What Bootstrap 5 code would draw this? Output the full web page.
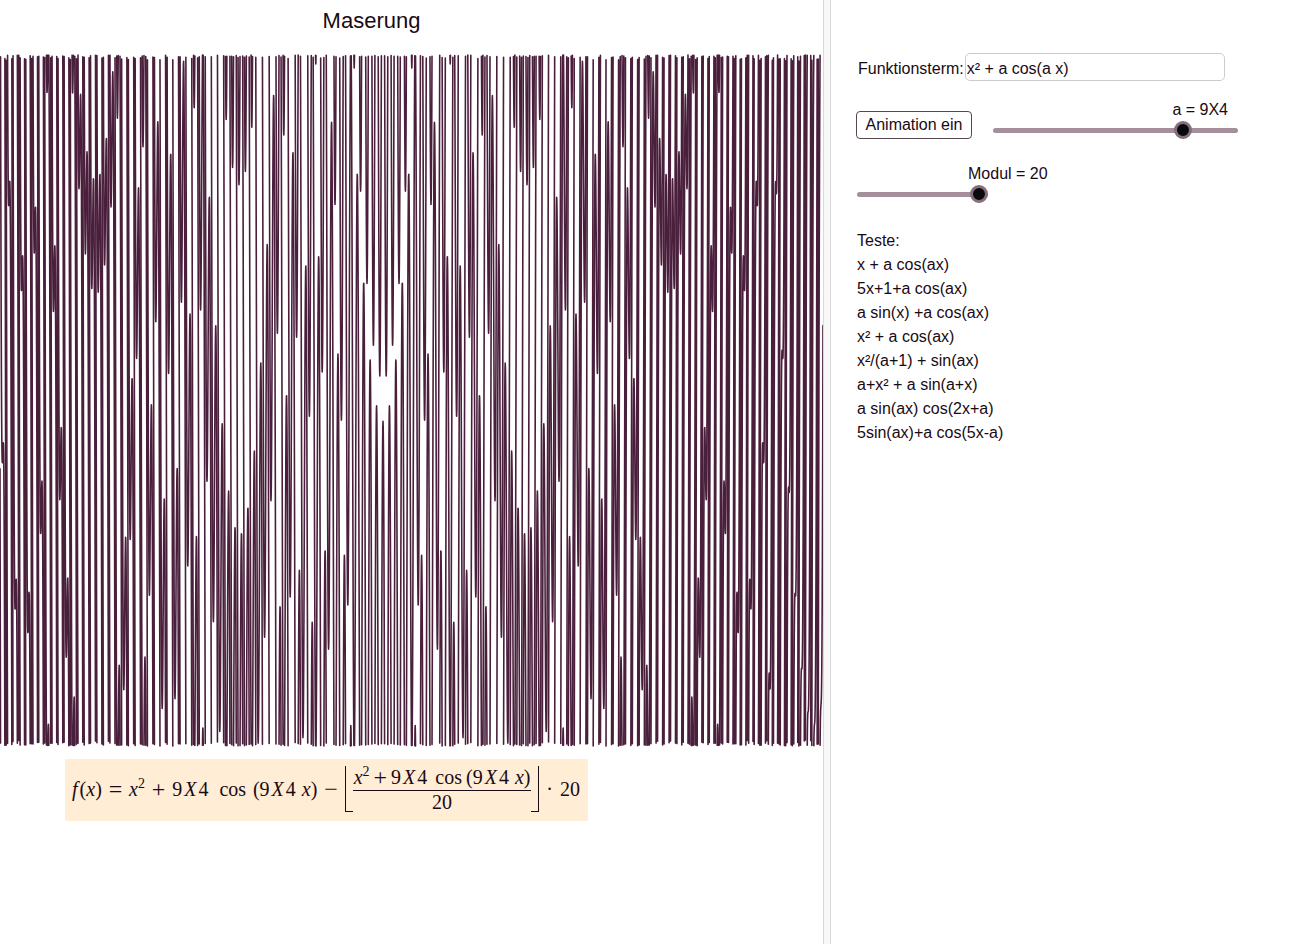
<!DOCTYPE html>
<html lang="de">
<head>
<meta charset="utf-8">
<meta name="viewport" content="width=device-width, initial-scale=1">
<title>Maserung</title>
<link href="https://cdn.jsdelivr.net/npm/bootstrap@5.3.0/dist/css/bootstrap.min.css" rel="stylesheet">
<style>
  body { font-family: "Liberation Sans", Arial, sans-serif; font-size: 16px; line-height: 24px; color: #1a0a14; background: #fff; }
  .applet { display: grid; grid-template-columns: 823fr 8px 477fr; min-height: calc(100vh - 2px); }
  .splitter { background: #f8f8f8; border: solid #d9d9d9; border-width: 0 1px; }
  .plot-title { font-size: 22px; line-height: 24px; padding: 9px 80px 17px 0; }
  .plot path { fill: none; stroke: #4a1f3c; stroke-width: 1.6; stroke-linejoin: round; stroke-linecap: round; }
  .formula { font-family: "Liberation Serif", serif; font-size: 20px; line-height: 22px; background: #ffedd5; width: 523px; height: 62px; margin: 9px 0 0 65px; padding: 0 8px 2px 7px; }
  .formula sup { font-size: 14px; top: -8px; line-height: 0; }
  .operator { font-size: 24px; }
  .triple { display: inline-flex; gap: 2px; }
  .fraction-top { gap: 4px; border-bottom: 1px solid #1a0a14; padding: 0 1px 2px; }
  .floor-l, .floor-r { width: 8px; height: 46px; border-bottom: 1px solid #1a0a14; }
  .floor-l { border-left: 1px solid #1a0a14; }
  .floor-r { border-right: 1px solid #1a0a14; }
  .controls { padding: 53px 24px 24px 26px; }
  .term-label { padding: 4px 1px 0; }
  .term { width: 260px; height: 28px; border: 1px solid #ccc; border-radius: 5px; padding: 3px 2px 0 1px; color: inherit; background: #fff; }
  .toggle { width: 116px; height: 28px; padding: 0 0 1px; margin-left: -1px; color: inherit; border: 1px solid #57474f; border-radius: 4px; background: #fff; line-height: 24px; }
  .gap-slider { gap: 21px; margin-top: 18px; }
  .slider-label { line-height: 22px; height: 22px; }
  .label-a { padding-right: 10px; }
  .label-m { padding-left: 111px; }
  .slider { appearance: none; -webkit-appearance: none; display: block; height: 18px; margin: 0; background: none; }
  .slider::-webkit-slider-runnable-track { height: 5px; border-radius: 3px; background: #a48f9b; }
  .slider::-webkit-slider-thumb { -webkit-appearance: none; width: 18px; height: 18px; margin-top: -7px; border-radius: 50%; background: #0b0a0b; border: 3px solid #84707c; }
  .slider-a { width: 245px; }
  .slider-m { width: 131px; }
  .examples { margin-top: 26px; }
</style>
<script src="https://cdn.jsdelivr.net/npm/bootstrap@5.3.0/dist/js/bootstrap.bundle.min.js"></script>
</head>
<body>
<div class="applet">
  <main class="overflow-hidden">
    <h1 class="plot-title text-center fw-normal m-0">Maserung</h1>
    <svg class="plot d-block w-100" viewBox="0 0 823 700" role="img" aria-label="Graph von f"><path id="curve"/></svg>
    <div class="formula d-flex align-items-center justify-content-between">
      <span class="triple"><i>f</i><span>(<i>x</i>)</span></span>
      <span class="operator">=</span>
      <span><i>x</i><sup>2</sup></span>
      <span class="operator">+</span>
      <span class="triple"><span>9</span><i>X</i><span>4</span></span>
      <span class="ms-1">cos</span>
      <span class="triple"><span>(9</span><i>X</i><span>4</span><span class="ms-1"><i>x</i>)</span></span>
      <span class="operator">−</span>
      <span class="d-flex align-items-center">
        <span class="floor-l"></span>
        <span class="d-block text-center">
          <span class="fraction-top d-flex">
            <span><i>x</i><sup>2</sup></span>
            <span class="operator">+</span>
            <span class="triple"><span>9</span><i>X</i><span>4</span></span>
            <span class="ms-1">cos</span>
            <span class="triple"><span>(9</span><i>X</i><span>4</span><span class="ms-1"><i>x</i>)</span></span>
          </span>
          <span class="d-block">20</span>
        </span>
        <span class="floor-r"></span>
      </span>
      <span>·</span>
      <span>20</span>
    </div>
  </main>
  <div class="splitter"></div>
  <aside class="controls">
    <div class="d-flex">
      <label for="term" class="term-label flex-shrink-0">Funktionsterm:</label>
      <input id="term" class="term" type="text" value="x² + a cos(a x)">
    </div>
    <div class="gap-slider d-flex align-items-end">
      <button type="button" class="toggle">Animation ein</button>
      <div>
        <label for="a" class="slider-label label-a d-block text-end">a = 9X4</label>
        <input id="a" class="slider slider-a" type="range" min="0" max="11.8" step="0.1" value="9.4">
      </div>
    </div>
    <div class="mt-4">
      <label for="m" class="slider-label label-m d-block">Modul = 20</label>
      <input id="m" class="slider slider-m" type="range" min="1" max="20" value="20">
    </div>
    <div class="examples">
      <div>Teste:</div>
      <div>x + a cos(ax)</div>
      <div>5x+1+a cos(ax)</div>
      <div>a sin(x) +a cos(ax)</div>
      <div>x² + a cos(ax)</div>
      <div>x²/(a+1) + sin(ax)</div>
      <div>a+x² + a sin(a+x)</div>
      <div>a sin(ax) cos(2x+a)</div>
      <div>5sin(ax)+a cos(5x-a)</div>
    </div>
  </aside>
</div>
<script>
  // f(x) = g(x) - floor(g(x) / m) * m with g(x) = x² + a cos(a x)
  const a = 9.4, m = 20, originX = 383, scaleX = 9.6, baseY = 696, scaleY = 34.55;
  let d = '', lastBand = null, prev = '';
  for (let i = 0; i <= 82300; i++) {
    const px = i / 100, x = (px - originX) / scaleX;
    const g = x * x + a * Math.cos(a * x), band = Math.floor(g / m);
    const point = px.toFixed(2) + ' ' + (baseY - (g - band * m) * scaleY).toFixed(1);
    // a new band is a jump of the floor term: lift the pen
    if (band !== lastBand) d += (prev ? 'L' + prev : '') + 'M' + point;
    else if (i % 20 === 0) d += 'L' + point;
    lastBand = band;
    prev = point;
  }
  document.getElementById('curve').setAttribute('d', d);
</script>
</body>
</html>
